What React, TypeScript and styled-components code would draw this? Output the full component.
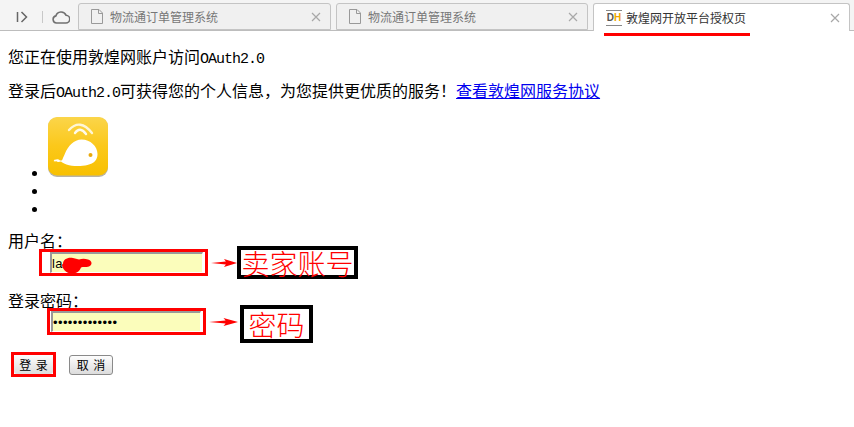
import React from "react";
import styled, { createGlobalStyle } from "styled-components";

const GlobalStyle = createGlobalStyle`
  html, body {
    margin: 0;
    padding: 0;
    background: #fff;
  }
  body {
    font-family: "Liberation Serif", "Noto Sans CJK SC", serif;
    font-size: 16px;
    color: #000;
  }
`;

const Page = styled.div`
  width: 854px;
  height: 427px;
  overflow: hidden;
`;

const TabBar = styled.div`
  height: 27px;
  padding-top: 3px;
  display: flex;
  align-items: stretch;
  background: #f4f4f4;
  border-bottom: 1px solid #bdbdbd;
`;

const Tools = styled.div`
  width: 78px;
  display: flex;
  align-items: center;
  padding-left: 16px;
  box-sizing: border-box;
`;

const ToolDivider = styled.span`
  width: 1px;
  height: 12px;
  margin: 0 9px 0 14px;
  background: #c8c8c8;
`;

const Tabs = styled.div`
  display: flex;
  gap: 5px;
`;

const Tab = styled.div<{ $active?: boolean; $width: number }>`
  position: relative;
  width: ${(p) => p.$width}px;
  height: ${(p) => (p.$active ? 28 : 27)}px;
  box-sizing: border-box;
  display: flex;
  align-items: center;
  padding: 0 9px 0 12px;
  background: ${(p) => (p.$active ? "#fff" : "#f0f0f0")};
  border: 1px solid #c4c4c4;
  border-bottom: ${(p) => (p.$active ? "none" : "1px solid #c4c4c4")};
  border-radius: 3px 3px 0 0;
  font-family: "Noto Sans CJK SC", sans-serif;
  font-size: 12px;
  color: ${(p) => (p.$active ? "#333" : "#777")};
`;

const TabTitle = styled.span<{ $gap?: number }>`
  flex: 1;
  margin-left: ${(p) => p.$gap ?? 7}px;
  white-space: nowrap;
`;

const TabMark = styled.span`
  position: absolute;
  left: 10px;
  top: 29px;
  width: 146px;
  height: 3px;
  background: #f00;
`;

const FaviconBox = styled.span`
  width: 16px;
  height: 16px;
  box-sizing: border-box;
  display: flex;
  align-items: center;
  justify-content: center;
  border-top: 1px solid #888;
  border-bottom: 1px solid #888;
  font: bold 10px "Liberation Sans", sans-serif;
  color: #555;
`;

const FaviconH = styled.span`
  color: #f0a800;
`;

const Content = styled.main`
  padding: 19px 8px 0;
`;

const Line = styled.p`
  margin: 0 0 18px;
  height: 16px;
  line-height: 16px;
  white-space: nowrap;
`;

const Latin = styled.span`
  font-family: "Liberation Mono", monospace;
  font-size: 15px;
  letter-spacing: -1px;
`;

const TermsLink = styled.a`
  color: #0000ee;
  text-decoration: underline;
`;

const Bullets = styled.ul`
  margin: -1px 0 16px;
  padding: 0 0 0 40px;
`;

const Bullet = styled.li`
  min-height: 18px;
  line-height: 18px;
`;

const AppIcon = styled.svg`
  display: inline-block;
  vertical-align: baseline;
  width: 60px;
  height: 60px;
  margin-bottom: 1px;
`;

const FieldLabel = styled.div<{ $gap?: number }>`
  height: 16px;
  line-height: 16px;
  margin-top: ${(p) => p.$gap ?? 0}px;
`;

const FieldRow = styled.div<{ $indent: number; $height: number; $lift?: number }>`
  display: flex;
  align-items: center;
  height: ${(p) => p.$height}px;
  margin-top: ${(p) => -(p.$lift ?? 0)}px;
  padding-left: ${(p) => p.$indent}px;
`;

const InputFrame = styled.div<{ $left: number; $width: number; $height: number }>`
  position: relative;
  flex: none;
  width: ${(p) => p.$width}px;
  height: ${(p) => p.$height}px;
  box-sizing: border-box;
  display: flex;
  padding: 0 2px 0 ${(p) => p.$left}px;
  background: #fff;
  border: 3px solid #f00;
`;

const TextField = styled.input`
  flex: 1;
  min-width: 0;
  box-sizing: border-box;
  margin: 0;
  padding: 0;
  background: #fbfdbb;
  border-style: solid;
  border-width: 2px 1px 1px 2px;
  border-color: #999 #fff #fff #999;
  outline: none;
  font-family: "Liberation Sans", sans-serif;
  font-size: 13px;
  letter-spacing: 0.4px;
  color: #000;
`;

const Blot = styled.svg`
  position: absolute;
  left: 20px;
  top: 5px;
  width: 31px;
  height: 17px;
`;

const Arrow = styled.svg<{ $width: number }>`
  width: ${(p) => p.$width}px;
  height: 10px;
  flex: none;
  margin-left: 3px;
`;

const Note = styled.div<{ $width: number; $height: number; $gap: number; $drop?: number }>`
  width: ${(p) => p.$width}px;
  height: ${(p) => p.$height}px;
  flex: none;
  margin: ${(p) => p.$drop ?? 0}px 0 0 ${(p) => p.$gap}px;
  box-sizing: border-box;
  display: flex;
  align-items: center;
  justify-content: center;
  border: 4px solid #000;
  font-family: "Noto Sans CJK SC", sans-serif;
  font-weight: 300;
  font-size: 28px;
  color: #f00;
  white-space: nowrap;
`;

const Actions = styled.div`
  display: flex;
  align-items: center;
  margin: 17px 0 0 3px;
`;

const SubmitFrame = styled.div`
  width: 45px;
  height: 25px;
  box-sizing: border-box;
  display: flex;
  border: 3px solid #f00;
  margin-right: 13px;
`;

const PushButton = styled.button<{ $framed?: boolean }>`
  width: ${(p) => (p.$framed ? "39px" : "44px")};
  height: ${(p) => (p.$framed ? "19px" : "20px")};
  box-sizing: border-box;
  padding: 0;
  background: linear-gradient(#fdfdfd, #dcdcdc);
  border: ${(p) => (p.$framed ? "none" : "1px solid #8a8a8a")};
  border-radius: 3px;
  font-family: "Noto Sans CJK SC", sans-serif;
  font-size: 12px;
  line-height: 1;
  word-spacing: 2px;
  color: #000;
`;

const PlayIcon = () => (
  <svg width="12" height="12" viewBox="0 0 12 12" fill="none" stroke="#666" strokeWidth="1.5">
    <path d="M1.500 1v10" />
    <path d="M5.500 1l5 5-5 5" />
  </svg>
);

const CloudIcon = () => (
  <svg width="18" height="14" viewBox="0 0 18 14" fill="none" stroke="#707070" strokeWidth="1.6">
    <path d="M4.500 13a3.600 3.600 0 0 1-.6-7.100A5.400 5.400 0 0 1 14 5.200 3.900 3.900 0 0 1 13.700 13z" />
  </svg>
);

const DocIcon = () => (
  <svg width="12" height="15" viewBox="0 0 12 15" fill="none" stroke="#999" strokeWidth="1" style={{ flex: "none" }}>
    <path d="M.5.5h7.500l3.500 3.500v10.500H.5z" />
    <path d="M7.500.5v4h4" />
  </svg>
);

const CloseIcon = () => (
  <svg width="10" height="10" viewBox="0 0 10 10" stroke="#a8a8a8" strokeWidth="1.2">
    <path d="M1 1l8 8M9 1l-8 8" />
  </svg>
);

const WhaleIcon = () => (
  <AppIcon viewBox="0 0 60 60">
    <defs>
      <linearGradient id="appBg" x1="0" y1="0" x2="0" y2="1">
        <stop offset="0" stopColor="#fbd54a" />
        <stop offset="0.5" stopColor="#fbc81a" />
        <stop offset="1" stopColor="#f8c000" />
      </linearGradient>
    </defs>
    <rect x="0" y="0.500" width="60" height="59.500" rx="9" fill="#b9b4a4" />
    <rect x="0" y="0" width="60" height="58.500" rx="9" fill="url(#appBg)" />
    <path
      d="M6 43c2-.5 3.500-1 4.500-.5 1 .5 1.500 1 2.500 1 1.500 0 1-.5 4-7 3-7.500 9-14 16.500-14 9 0 16 7 16 14.500 0 6-3.500 9.500-10 11-6.500 1.400-15 1.400-21-.5-2.500-.8-4.500-2-5.500-3-2 .8-4 .6-5-.5-.8.800-1.500.500-2.500 0 .7-.500 1-1 .5-1.500z"
      fill="#fff"
    />
    <circle cx="42.500" cy="38" r="2" fill="#e9a90d" />
    <path d="M27 16Q32 9 38 17" fill="none" stroke="#fff" strokeWidth="2.400" strokeLinecap="round" opacity="0.9" />
    <path d="M21 13Q32 1 44 16" fill="none" stroke="#fff" strokeWidth="2.400" strokeLinecap="round" opacity="0.8" />
  </AppIcon>
);

const RedArrow = ({ width }: { width: number }) => (
  <Arrow $width={width} viewBox="0 0 28 10" preserveAspectRatio="none">
    <path d="M0 5L16 3.500 14 1 28 5 14 9 16 6.500z" fill="#f00" />
  </Arrow>
);

export default function App() {
  return (
    <Page>
      <GlobalStyle />
      <TabBar>
        <Tools>
          <PlayIcon />
          <ToolDivider />
          <CloudIcon />
        </Tools>
        <Tabs>
          <Tab $width={253}>
            <DocIcon />
            <TabTitle>物流通订单管理系统</TabTitle>
            <CloseIcon />
          </Tab>
          <Tab $width={252}>
            <DocIcon />
            <TabTitle>物流通订单管理系统</TabTitle>
            <CloseIcon />
          </Tab>
          <Tab $active $width={257}>
            <FaviconBox>
              D<FaviconH>H</FaviconH>
            </FaviconBox>
            <TabTitle $gap={4}>敦煌网开放平台授权页</TabTitle>
            <CloseIcon />
            <TabMark />
          </Tab>
        </Tabs>
      </TabBar>
      <Content>
        <Line>
          您正在使用敦煌网账户访问<Latin>OAuth2.0</Latin>
        </Line>
        <Line>
          登录后<Latin>OAuth2.0</Latin>可获得您的个人信息，为您提供更优质的服务！<TermsLink href="#">查看敦煌网服务协议</TermsLink>
        </Line>
        <Bullets>
          <Bullet>
            <WhaleIcon />
          </Bullet>
          <Bullet />
          <Bullet />
        </Bullets>
        <FieldLabel>用户名：</FieldLabel>
        <FieldRow $indent={31} $height={27} $lift={1}>
          <InputFrame $left={8} $width={169} $height={27}>
            <TextField readOnly value="la" />
            <Blot viewBox="0 0 31 17">
              <path d="M1 7C1 2 6 0 11 1c2 .5 4 1 6 1.500 3-1 6-1 9 0 4 1 5 5 1 7-3 1-6 0-8 1-1 3-4 6-9 6-6 0-10-5-10-9z" fill="#f00" />
            </Blot>
          </InputFrame>
          <RedArrow width={26} />
          <Note $width={121} $height={33} $gap={0}>卖家账号</Note>
        </FieldRow>
        <FieldLabel $gap={18}>登录密码：</FieldLabel>
        <FieldRow $indent={39} $height={27} $lift={2}>
          <InputFrame $left={1} $width={159} $height={27}>
            <TextField readOnly type="password" value="1234567890123" />
          </InputFrame>
          <RedArrow width={29} />
          <Note $width={73} $height={38} $gap={2} $drop={5}>密码</Note>
        </FieldRow>
        <Actions>
          <SubmitFrame>
            <PushButton $framed>登 录</PushButton>
          </SubmitFrame>
          <PushButton>取 消</PushButton>
        </Actions>
      </Content>
    </Page>
  );
}
